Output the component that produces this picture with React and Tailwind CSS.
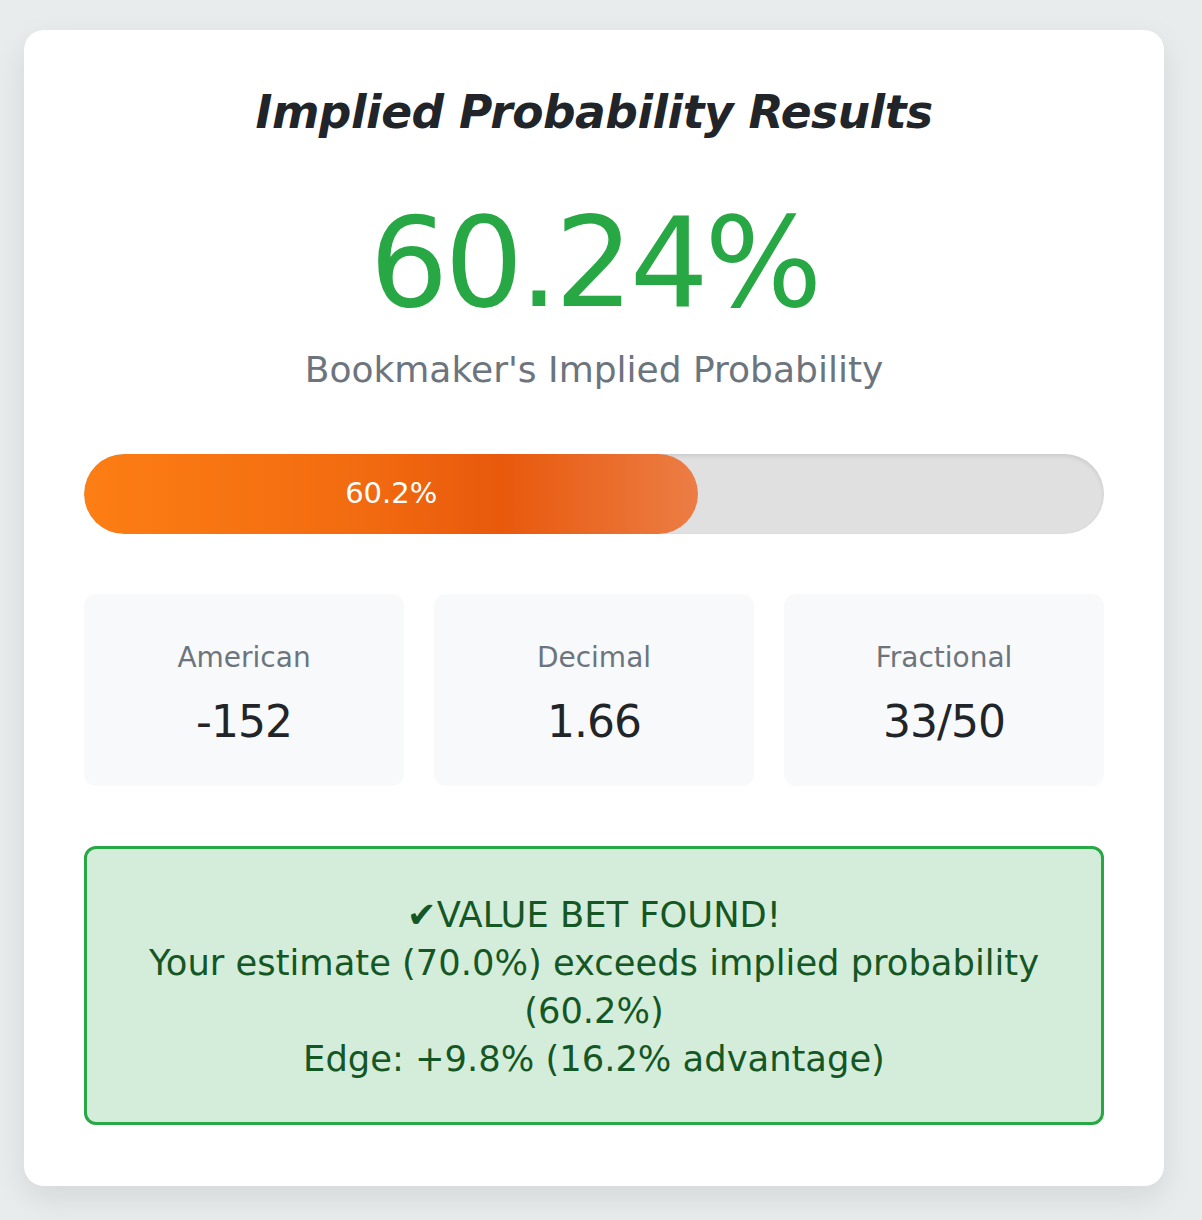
export default function App() {
  const implied = 60.24;

  return (
    <div
      className="min-h-screen bg-[#e8ecec] pl-[24px] pr-[38px] pt-[30px] pb-[34px]"
      style={{ fontFamily: '"DejaVu Sans", "Open Sans", sans-serif' }}
    >
      <div className="bg-white rounded-[20px] shadow-[0_12px_32px_rgba(0,0,0,0.09)] px-[60px] pt-[53px] pb-[61px]">
        {/* title */}
        <h2 className="text-center text-[45.5px] leading-[60px] font-bold italic text-[#212529] tracking-[-0.5px]">
          Implied Probability Results
        </h2>

        {/* big number */}
        <div className="mt-[55px] text-center text-[124px] leading-[130px] font-medium text-[#28a745] tracking-[-4px]">
          {implied.toFixed(2)}%
        </div>
        <div className="mt-[22px] text-center text-[36px] leading-[40px] text-[#6c757d]">
          Bookmaker's Implied Probability
        </div>

        {/* progress */}
        <div className="mt-[64px] h-[80px] rounded-full bg-[#e0e0e0] shadow-[inset_0_2px_4px_rgba(0,0,0,0.1)] overflow-hidden">
          <div
            className="h-full rounded-full bg-[linear-gradient(90deg,#fd7e14_0%,#f26b10_45%,#e8590c_68%,#ec7d45_100%)] flex items-center justify-center text-white text-[29px]"
            style={{ width: `${implied}%` }}
          >
            60.2%
          </div>
        </div>

        {/* odds */}
        <div className="mt-[60px] grid grid-cols-3 gap-[30px]">
          <OddsBox label="American" value="-152" />
          <OddsBox label="Decimal" value="1.66" />
          <OddsBox label="Fractional" value="33/50" />
        </div>

        {/* value bet */}
        <div className="mt-[60px] rounded-[12px] border-[3px] border-[#28a745] bg-[#d4edda] text-[#155724] text-center text-[35.3px] leading-[48px] px-[40px] pt-[42px] pb-[39px]">
          <div>✔VALUE BET FOUND!</div>
          <div>Your estimate (70.0%) exceeds implied probability (60.2%)</div>
          <div>Edge: +9.8% (16.2% advantage)</div>
        </div>
      </div>
    </div>
  );
}

function OddsBox({ label, value }) {
  return (
    <div className="h-[192px] rounded-[12px] bg-[#f8f9fa] flex flex-col items-center justify-center pt-[10px]">
      <div className="text-[28px] leading-[32px] text-[#6c757d]">{label}</div>
      <div className="mt-[22px] text-[44px] leading-[52px] text-[#212529] tracking-[-1px]">{value}</div>
    </div>
  );
}
